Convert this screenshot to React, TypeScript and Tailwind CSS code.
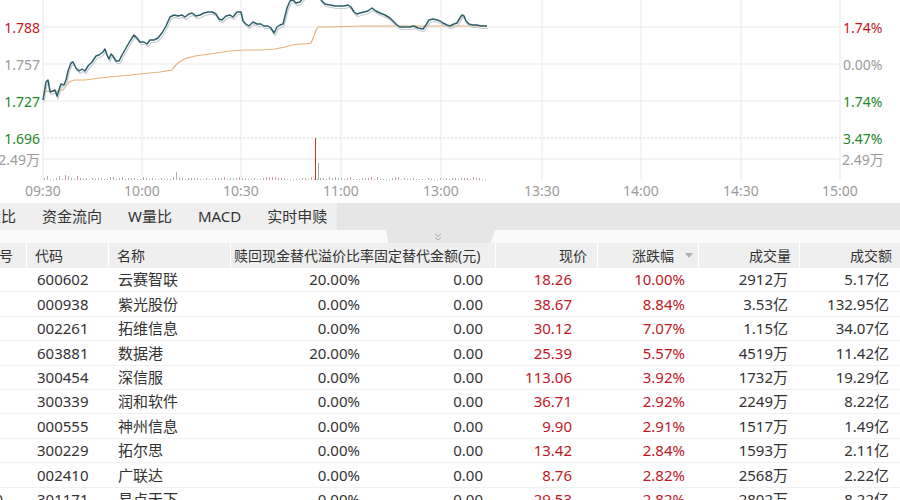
import React from "react";

const price: [number, number][] = [
  [43,100],[46,82],[48,80],[50,92],[53,91],[55,90],[57,96],[59,90],[61,84],[64,85],[66,80],[68,71],[71,63],[73,62],[76,68],[79,71],[82,69],[85,71],[88,66],[92,62],[96,56],[99,55],[103,52],[105,49],[107,55],[109,59],[111,54],[113,56],[116,61],[119,61],[122,55],[126,48],[130,41],[134,35],[137,38],[140,42],[144,42],[147,44],[150,40],[154,40],[158,38],[162,33],[166,26],[170,17],[174,15],[178,16],[182,15],[185,17],[189,14],[192,13],[196,16],[200,15],[204,13],[208,12],[212,12],[216,14],[219,19],[222,20],[226,16],[230,15],[233,17],[237,12],[241,12],[243,21],[246,24],[249,26],[253,22],[257,24],[261,24],[264,26],[268,26],[271,28],[274,33],[277,27],[280,25],[283,24],[285,16],[287,8],[290,1],[293,0],[296,3],[300,2],[303,-2],[308,-8],[312,-10],[318,-5],[322,1],[325,4],[330,5],[335,6],[340,6],[344,6],[348,5],[351,7],[354,12],[357,14],[360,13],[364,12],[368,11],[372,8],[376,11],[380,13],[385,15],[390,18],[394,22],[397,25],[400,27],[405,27],[410,27],[414,26],[418,28],[423,29],[426,25],[429,20],[433,19],[437,20],[440,21],[443,23],[447,25],[450,26],[454,24],[457,23],[460,18],[462,15],[464,16],[466,21],[469,24],[473,25],[477,25],[481,26],[487,26],
];

const avg: [number, number][] = [
  [43,92],[50,91],[58,91],[63,90],[66,86],[69,82],[74,80],[85,80],[100,78],[120,76],[140,74],[160,72],[172,70],[174,67],[178,63],[184,59],[195,56],[210,54],[230,51],[245,50],[260,50],[275,49],[285,47],[292,45],[300,44],[306,44],[311,43],[314,36],[316,30],[318,27],[330,27],[360,26],[400,26],[440,26],[487,26],
];

const toPts = (a: [number, number][], dx = 0, dy = 0) =>
  a.map(([x, y]) => `${x + dx},${y + dy}`).join(" ");

const vols: { x: number; h: number; c: string }[] = (() => {
  const out: { x: number; h: number; c: string }[] = [];
  let s = 7;
  for (let x = 44; x <= 487; x += 3) {
    s = (s * 9301 + 49297) % 233280;
    const r = s / 233280;
    let h = 1 + Math.floor(r * 2.5);
    if (x < 80 && r > 0.5) h += 2;
    out.push({ x, h, c: r > 0.6 ? "#c9a0a0" : "#a9b4b0" });
  }
  out.push({ x: 176, h: 8, c: "#a9b4b0" });
  out.push({ x: 318, h: 17, c: "#a9b4b0" });
  out.push({ x: 315, h: 42, c: "#c0392b" });
  return out;
})();

const timeX = [43, 142, 241, 341, 441, 542, 641, 741, 840];
const times = ["09:30", "10:00", "10:30", "11:00", "13:00", "13:30", "14:00", "14:30", "15:00"];

const RED = "#c0171f";
const GREEN = "#23872a";
const GRAY = "#9b9b9b";
const FONT = "'Noto Sans', 'Noto Sans CJK SC', sans-serif";

function Chart() {
  return (
    <svg width="900" height="203" viewBox="0 0 900 203" fontFamily={FONT} className="block">
      {timeX.map((x) => (
        <line key={x} x1={x} y1={0} x2={x} y2={180} stroke="#e8e8e8" strokeWidth="1" />
      ))}
      {[27, 64, 101, 159].map((y) => (
        <line key={y} x1={43} y1={y} x2={840} y2={y} stroke="#e8e8e8" strokeWidth="1" />
      ))}
      <line x1={43} y1={138} x2={840} y2={138} stroke="#d4d4d4" strokeWidth="1" strokeDasharray="2 2" />
      {vols.map((v, i) => (
        <line key={i} x1={v.x + 0.5} y1={180} x2={v.x + 0.5} y2={180 - v.h} stroke={v.c} strokeWidth="1" />
      ))}
      <polyline points={toPts(avg)} fill="none" stroke="#e5b179" strokeWidth="1.2" />
      <polyline points={toPts(price, 1, 2.5)} fill="none" stroke="#c4ccd0" strokeWidth="1.2" />
      <polyline points={toPts(price)} fill="none" stroke="#2c5f6a" strokeWidth="1.5" strokeLinejoin="round" />
      <g fontSize="14" dominantBaseline="central">
        <text x={40} y={27} textAnchor="end" fill={RED}>1.788</text>
        <text x={40} y={64} textAnchor="end" fill={GRAY}>1.757</text>
        <text x={40} y={101} textAnchor="end" fill={GREEN}>1.727</text>
        <text x={40} y={138} textAnchor="end" fill={GREEN}>1.696</text>
        <text x={40} y={159} textAnchor="end" fill={GRAY}>2.49万</text>
        <text x={843} y={27} fill={RED}>1.74%</text>
        <text x={843} y={64} fill={GRAY}>0.00%</text>
        <text x={843} y={101} fill={GREEN}>1.74%</text>
        <text x={843} y={138} fill={GREEN}>3.47%</text>
        <text x={842} y={159} fill={GRAY}>2.49万</text>
        {timeX.map((x, i) => (
          <text key={x} x={x} y={190} textAnchor="middle" fill={GRAY}>{times[i]}</text>
        ))}
      </g>
    </svg>
  );
}

const rows = [
  ["10", "600602", "云赛智联", "20.00%", "0.00", "18.26", "10.00%", "2912万", "5.17亿"],
  ["10", "000938", "紫光股份", "0.00%", "0.00", "38.67", "8.84%", "3.53亿", "132.95亿"],
  ["10", "002261", "拓维信息", "0.00%", "0.00", "30.12", "7.07%", "1.15亿", "34.07亿"],
  ["10", "603881", "数据港", "20.00%", "0.00", "25.39", "5.57%", "4519万", "11.42亿"],
  ["10", "300454", "深信服", "0.00%", "0.00", "113.06", "3.92%", "1732万", "19.29亿"],
  ["10", "300339", "润和软件", "0.00%", "0.00", "36.71", "2.92%", "2249万", "8.22亿"],
  ["10", "000555", "神州信息", "0.00%", "0.00", "9.90", "2.91%", "1517万", "1.49亿"],
  ["10", "300229", "拓尔思", "0.00%", "0.00", "13.42", "2.84%", "1593万", "2.11亿"],
  ["10", "002410", "广联达", "0.00%", "0.00", "8.76", "2.82%", "2568万", "2.22亿"],
  ["10", "301171", "易点天下", "0.00%", "0.00", "29.53", "2.82%", "2802万", "8.22亿"],
];

export default function App() {
  return (
    <div className="w-[900px] h-[500px] overflow-hidden bg-white text-[#333] font-['Noto_Sans','Noto_Sans_CJK_SC',sans-serif]">
      <Chart />
      {/* tab bar */}
      <div className="h-[27px] flex bg-[#e6e6e6] text-[15px] text-[#333]">
        <div className="w-[337px] h-full bg-[#efefef] flex items-center overflow-hidden">
          <div className="flex items-center ml-[-27px] shrink-0">
            <span className="px-[13px] whitespace-nowrap">量比</span>
            <span className="px-[13px] whitespace-nowrap">资金流向</span>
            <span className="px-[13px] whitespace-nowrap">W量比</span>
            <span className="px-[13px] whitespace-nowrap">MACD</span>
            <span className="px-[13px] whitespace-nowrap">实时申赎</span>
          </div>
        </div>
      </div>
      {/* collapse strip */}
      <div className="h-[13px] flex bg-[#fafafa]">
        <div className="ml-[386px] w-[109px] h-full bg-[#e6e6e6] [clip-path:polygon(0_0,100%_0,96%_100%,2%_100%)] flex items-center justify-center">
          <svg width="8" height="8" viewBox="0 0 8 8" className="ml-[-5px]">
            <path d="M1 1 L4 3.5 L7 1 M1 4.5 L4 7 L7 4.5" fill="none" stroke="#a8a8a8" strokeWidth="1" />
          </svg>
        </div>
      </div>
      {/* header */}
      <div className="h-[25px] flex text-[14px] text-[#333] bg-white">
        <div className="w-[26px] h-full bg-[#efefef] overflow-hidden flex items-center">
          <span className="ml-[-15px] whitespace-nowrap">序号</span>
        </div>
        <div className="w-[81px] h-full bg-[#efefef] ml-[1px] pl-[8px] flex items-center">代码</div>
        <div className="w-[121px] h-full bg-[#efefef] ml-[1px] pl-[8px] flex items-center">名称</div>
        <div className="w-[143px] h-full bg-[#efefef] ml-[1px] pl-[3px] flex items-center overflow-hidden whitespace-nowrap">赎回现金替代溢价比率</div>
        <div className="w-[121px] h-full bg-[#efefef] flex items-center whitespace-nowrap overflow-hidden">固定替代金额(元)</div>
        <div className="w-[101px] h-full bg-[#efefef] ml-[1px] pr-[10px] flex items-center justify-end">现价</div>
        <div className="w-[100px] h-full bg-[#efefef] ml-[1px] pr-[5px] flex items-center justify-end gap-[11px]">
          <span>涨跌幅</span>
          <svg width="8" height="6" viewBox="0 0 8 6"><path d="M0 0 H8 L4 5 Z" fill="#b0b0b0" /></svg>
        </div>
        <div className="w-[100px] h-full bg-[#efefef] ml-[1px] pr-[8px] flex items-center justify-end">成交量</div>
        <div className="flex-1 h-full bg-[#efefef] ml-[1px] pr-[8px] flex items-center justify-end">成交额</div>
      </div>
      {/* rows */}
      <div className="text-[15px] text-[#333]">
        {rows.map((r, i) => (
          <div key={i} className="h-[24.4px] flex items-center border-b border-[#f0f0f0] whitespace-nowrap">
            <div className="w-[26px] overflow-hidden">
              <div className="ml-[-14px]">{i === 9 ? r[0] : ""}</div>
            </div>
            <div className="w-[81px] pl-[11px]">{r[1]}</div>
            <div className="w-[122px] pl-[11px]">{r[2]}</div>
            <div className="w-[144px] pr-[13px] text-right">{r[3]}</div>
            <div className="w-[121px] pr-[11px] text-right">{r[4]}</div>
            <div className="w-[102px] pr-[24px] text-right text-[#c0171f]">{r[5]}</div>
            <div className="w-[101px] pr-[12px] text-right text-[#c0171f]">{r[6]}</div>
            <div className="w-[101px] pr-[10px] text-right">{r[7]}</div>
            <div className="flex-1 pr-[11px] text-right">{r[8]}</div>
          </div>
        ))}
      </div>
    </div>
  );
}
